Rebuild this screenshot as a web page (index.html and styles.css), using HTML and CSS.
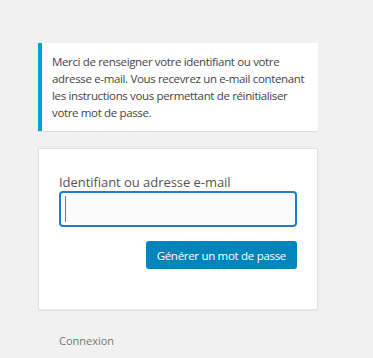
FILE: index.html
```html
<!DOCTYPE html>
<html lang="fr">

<head>
    <meta charset="UTF-8">
    <meta name="viewport" content="width=device-width, initial-scale=1.0">
    <title>Mot de passe oublié</title>
    <link rel="stylesheet" href="styles.css">
</head>

<body>
    <div id="login">
        <p class="message">Merci de renseigner votre identifiant ou votre adresse e-mail. Vous recevrez un e-mail contenant les instructions vous permettant de réinitialiser votre mot de passe.</p>

        <form class="lostpassword">
            <label for="user_login">Identifiant ou adresse e-mail</label>
            <div class="input-wrap">
                <input type="text" id="user_login">
                <span class="caret"></span>
            </div>
            <div class="submit">
                <button type="button">Générer un mot de passe</button>
            </div>
        </form>

        <p class="nav"><a href="#">Connexion</a></p>
    </div>
</body>

</html>
```

FILE: styles.css
```css
body {
    margin: 0;
    background: #f1f1f1;
    font-family: "Open Sans", "Noto Sans", sans-serif;
    font-size: 13px;
    color: #444;
}

#login {
    width: 280px;
    margin-left: 38px;
    padding-top: 43px;
}

.message {
    margin: 0;
    background: #fff;
    border-left: 4px solid #00a0d2;
    box-shadow: 0 1px 1px rgba(0, 0, 0, 0.08);
    padding: 10px 6px 10px 10px;
    font-size: 11.5px;
    letter-spacing: -0.35px;
    line-height: 17px;
    color: #444;
}

.lostpassword {
    margin-top: 17px;
    background: #fff;
    border: 1px solid #e2e2e2;
    box-shadow: 0 1px 2px rgba(0, 0, 0, 0.06);
    padding: 25px 20px 40px;
}

label {
    display: block;
    font-size: 13px;
    letter-spacing: -0.05px;
    line-height: 17px;
    color: #555;
}

.input-wrap {
    position: relative;
}

input {
    display: block;
    box-sizing: border-box;
    width: 100%;
    height: 36px;
    margin: 0;
    padding: 0 6px;
    background: #fbfbfb;
    border: 2px solid #1e7fc4;
    border-radius: 4px;
    outline: none;
    font-size: 20px;
}

.caret {
    position: absolute;
    left: 6px;
    top: 5px;
    width: 1px;
    height: 26px;
    background: #777;
}

.submit {
    display: flex;
    justify-content: flex-end;
    margin-top: 14px;
}

button {
    height: 28px;
    padding: 0 11px;
    background: #0085ba;
    border: none;
    border-radius: 3px;
    color: #fff;
    font-family: "Open Sans", "Noto Sans", sans-serif;
    font-size: 11.5px;
    letter-spacing: -0.3px;
    cursor: pointer;
}

.nav {
    margin: 0;
    padding: 22px 21px 0;
    line-height: 17px;
}

.nav a {
    color: #72777c;
    text-decoration: none;
    font-size: 11px;
}
```
